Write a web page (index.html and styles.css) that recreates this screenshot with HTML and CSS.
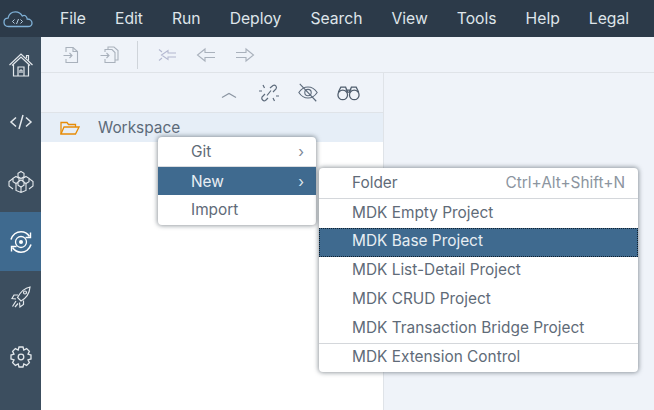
FILE: index.html
```html
<!DOCTYPE html>
<html lang="en">
<head>
<meta charset="utf-8">
<title>Business Application Studio</title>
<link rel="stylesheet" href="styles.css">
</head>
<body>
<header class="menubar">
  <svg class="logo" width="32" height="20" viewBox="0 0 32 20" fill="none" stroke="#7fb0d6" stroke-width="1.3"><path d="M8 17.5H6.5C3.5 17.5 2 15.500 2 13.200C2 10.800 3.800 9.200 6 9.200C6.800 5.200 10 2.800 13.500 2.800C16.500 2.800 19 4.500 20.300 7C21.500 6.300 23.500 6.500 24.500 8C25 8.800 25.200 9.500 25.200 10C28 10 30 11.800 30 14C30 16.200 28.200 17.500 26 17.500Z"/><path d="M12.500 10.500L10.500 12.500L12.500 14.500M18.500 10.500L20.500 12.500L18.500 14.500M16.500 10L14.500 15" stroke="#b8cfe2" stroke-width="1"/></svg>
  <nav class="menus">
    <span>File</span><span>Edit</span><span>Run</span><span>Deploy</span><span>Search</span><span>View</span><span>Tools</span><span>Help</span><span>Legal</span>
  </nav>
</header>
<div class="main">
  <aside class="sidebar">
    <div class="side-item s1"><svg width="26" height="26" viewBox="0 0 26 26" fill="none" stroke="#e3e8ec" stroke-width="1.200"><path d="M1.500 13L13 2L24.500 13M4 13.500L13 5L22 13.500"/><path d="M5.500 12.500V24H20.500V12.500M18.500 6V3.500H20.500V8.500"/><path d="M10 24V15H16V24M12 18V21M14 18V21M12 18H14"/></svg></div>
    <div class="side-item s2"><svg width="24" height="16" viewBox="0 0 24 16" fill="none" stroke="#e3e8ec" stroke-width="1.500"><path d="M7 3.500L2 8L7 12.500M17 3.500L22 8L17 12.500M14 1L10 15"/></svg></div>
    <div class="side-item s3"><svg width="28" height="24" viewBox="0 0 28 24" fill="none" stroke="#e3e8ec" stroke-width="1.100"><path d="M14 1.500L17 3.200V6.800L14 8.500L11 6.800V3.200ZM9 6.500L12 8.200V11.800L9 13.500L6 11.800V8.200ZM19 6.500L22 8.200V11.800L19 13.500L16 11.800V8.200ZM14 10L17 11.700V15.300L14 17L11 15.300V11.700Z"/><path d="M6 8.500L2 11.500V16L6 19M22 8.500L26 11.500V16L22 19M9 14V20.500L14 22.500L19 20.500V14M14 17V22.500"/></svg></div>
    <div class="side-item s4 active"><svg width="26" height="26" viewBox="0 0 26 26" fill="none" stroke="#fff" stroke-width="1.600"><path d="M3 10.500C4.500 6 8.500 2.800 13 2.800C16.500 2.800 19.500 4.500 21.500 7.500M23 15.500C21.500 20 17.500 23.200 13 23.200C9.500 23.200 6.500 21.500 4.500 18.500"/><path d="M22.500 3.500V8.500H17.500M3.500 22.500V17.500H8.500" stroke-width="1.400"/><circle cx="13" cy="13" r="5.500" stroke-width="1.300"/><circle cx="13" cy="13" r="2" fill="#fff" stroke="none"/></svg></div>
    <div class="side-item s5"><svg width="22" height="24" viewBox="0 0 22 24" fill="none" stroke="#e3e8ec" stroke-width="1.200"><path d="M20 2C14.500 3 10.500 7 7.500 12.500L11 16C16.500 13 19.500 8.500 20 2Z"/><path d="M8 10H4L2 13.500L6 14M13.500 15.500V19.500L10 22L9.500 17.500M6 16L2.500 21.500M8 18.500L5 22"/><circle cx="15" cy="7.500" r="1.500"/></svg></div>
    <div class="side-item s6"><svg width="24" height="24" viewBox="0 0 24 24" fill="none" stroke="#e3e8ec" stroke-width="1.300"><path d="M10 2H14L14.800 5L17.600 3.600L20.400 6.400L19 9.200L22 10V14L19 14.800L20.400 17.600L17.600 20.400L14.800 19L14 22H10L9.200 19L6.400 20.400L3.600 17.600L5 14.800L2 14V10L5 9.200L3.600 6.400L6.400 3.600L9.200 5Z"/><circle cx="12" cy="12" r="2.800"/></svg></div>
  </aside>
  <div class="workspace">
    <div class="toolbar">
      <svg class="t1" width="20" height="20" viewBox="0 0 20 20" fill="none" stroke="#a9b1bc" stroke-width="1.100"><path d="M5 7V2.500H12L16.500 6.500V17.500H5V14"/><path d="M12 2.500V6.500H16.500M2.500 10.500H11M8.500 8L11 10.500L8.500 13"/></svg>
      <svg class="t2" width="22" height="20" viewBox="0 0 22 20" fill="none" stroke="#a9b1bc" stroke-width="1.100"><path d="M7 7V4.500H14L17 7.500V17.500H7V14M10 4.500V2H16L20 5.500V15H17"/><path d="M2.500 10.500H11M8.500 8L11 10.500L8.500 13"/></svg>
      <span class="tool-sep"></span>
      <svg width="22" height="18" viewBox="0 0 22 18" fill="none" stroke="#b4b8d0" stroke-width="1.100"><path d="M20 7H12V4.500L5.500 9L12 13.500V11H20M3 3.500L6 6M3 14.500L6 12"/></svg>
      <svg width="22" height="18" viewBox="0 0 22 18" fill="none" stroke="#a9b1bc" stroke-width="1.100"><path d="M20 6.500H10V3L2.500 9L10 15V11.500H20"/></svg>
      <svg width="22" height="18" viewBox="0 0 22 18" fill="none" stroke="#a9b1bc" stroke-width="1.100"><path d="M2 6.500H12V3L19.500 9L12 15V11.500H2"/></svg>
    </div>
    <div class="panes">
      <section class="explorer">
        <div class="explorer-tools">
          <svg class="chev-up" width="18" height="10" viewBox="0 0 18 10" fill="none" stroke="#8c96a3" stroke-width="1.200"><path d="M2 7.500L9 3.500L16 7.500"/></svg>
          <svg width="22" height="22" viewBox="0 0 22 22" fill="none" stroke="#5d6b7c" stroke-width="1.200"><path d="M12 6L15 3.500C17 2.500 19.500 4.500 18 7L15 10M10 16L7.500 18.500C5.500 19.500 3 17.500 4 15L7 12M13 8.500L9 13.500M1 9H4M18 14H21M5 3L6.500 6M15 16L16.500 19"/></svg>
          <svg width="22" height="22" viewBox="0 0 24 22" fill="none" stroke="#5d6b7c" stroke-width="1.200"><path d="M2 10.500C5 6 8.500 4.500 12 4.500C15.500 4.500 19 6 22 10.500C19 15 15.500 16.500 12 16.500C8.500 16.500 5 15 2 10.500Z"/><circle cx="12" cy="10.500" r="3.500"/><path d="M3 1L21 20"/></svg>
          <svg width="25" height="18" viewBox="0 0 26 18" fill="none" stroke="#4f5d6d" stroke-width="1.300"><circle cx="7" cy="11" r="5"/><circle cx="19" cy="11" r="5"/><path d="M2.500 8L5 3H10L12 8H14L16 3H21L23.500 8M10 6H16"/></svg>
        </div>
        <div class="tree-row">
          <svg width="22" height="16" viewBox="0 0 22 16" fill="none" stroke="#e78c07" stroke-width="1.300"><path d="M3 14V2.500H9L10.500 4.500H17.500V7"/><path d="M3 14L6 7H21L17.500 14Z"/></svg>
          <span>Workspace</span>
        </div>
      </section>
      <section class="editor"></section>
    </div>
  </div>
</div>

<div class="menu primary">
  <div class="menu-item first"><span>Git</span><i class="chev">›</i></div>
  <div class="menu-item on"><span>New</span><i class="chev">›</i></div>
  <div class="menu-item last"><span>Import</span></div>
</div>

<div class="menu secondary">
  <div class="menu-item folder"><span>Folder</span><span class="shortcut">Ctrl+Alt+Shift+N</span></div>
  <div class="divider"></div>
  <div class="menu-item">MDK Empty Project</div>
  <div class="menu-item on focus">MDK Base Project</div>
  <div class="menu-item">MDK List-Detail Project</div>
  <div class="menu-item">MDK CRUD Project</div>
  <div class="menu-item">MDK Transaction Bridge Project</div>
  <div class="divider"></div>
  <div class="menu-item ext">MDK Extension Control</div>
</div>
</body>
</html>
```
FILE: styles.css
```css
* { box-sizing: border-box; }
html, body { margin: 0; height: 100%; overflow: hidden; }
body {
  width: 654px; height: 410px;
  display: flex; flex-direction: column;
  font-family: Inter, "Liberation Sans", sans-serif;
  font-size: 15.400px; color: #5a6876;
  background: #fff;
  position: relative;
}
.menubar {
  height: 37px; flex: none;
  display: flex; align-items: center;
  background: #2c3a49;
  padding-left: 1px;
}
.logo { margin-left: 1px; flex: none; }
.menus { display: flex; flex: none; margin-left: 26px; color: #dfe5ea; font-size: 15.700px; }
.menus span { margin-right: 29px; }
.menus span:last-child { margin-right: 0; }
.main { flex: 1; display: flex; min-height: 0; }
.sidebar { width: 41px; flex: none; background: #3c4e5f; display: flex; flex-direction: column; }
.side-item { display: flex; align-items: center; justify-content: center; }
.s1 { height: 55px; }
.s2 { height: 59px; }
.s3 { height: 61px; }
.s4 { height: 59px; }
.s5 { height: 52px; }
.s6 { height: 68px; }
.active { background: #3f6a8f; }
.workspace { flex: 1; display: flex; flex-direction: column; min-width: 0; }
.toolbar {
  height: 36px; flex: none;
  display: flex; align-items: center;
  padding-left: 20px; gap: 17px;
  background: #eff3f9;
  border-bottom: 1px solid #dfe3e8;
}
.tool-sep { width: 1px; height: 28px; background: #cfd4da; margin: 0 1px 0 0; }
.panes { flex: 1; display: flex; min-height: 0; }
.explorer { width: 343px; flex: none; background: #fff; border-right: 1px solid #dfe3e8; }
.explorer-tools {
  height: 40px;
  display: flex; align-items: center; justify-content: flex-end;
  padding-right: 22px; gap: 17px;
  background: #eff3f9;
  border-bottom: 1px solid #dfe3e8;
}
.chev-up { margin: 4px 3px 0 0; }
.tree-row {
  height: 29px;
  display: flex; align-items: center;
  padding-left: 17px; gap: 18px;
  background: #e6eef7;
  color: #5c6a79;
}
.editor { flex: 1; background: #eff3f9; }
.menu {
  position: absolute;
  background: #fff;
  border-radius: 4px;
  box-shadow: 0 0 4px 1px rgba(70, 80, 90, .55);
  color: #5f6b78;
}
.menu-item { display: flex; align-items: center; justify-content: space-between; }
.primary { left: 158px; top: 137px; width: 158px; height: 88px; }
.primary .menu-item { padding: 0 12px 0 33px; }
.primary .first { height: 30px; border-bottom: 1px solid #d9dce0; padding-bottom: 1px; }
.primary .on { height: 28px; }
.primary .last { height: 30px; padding-bottom: 2px; }
.chev { font-style: normal; font-size: 15px; color: #7d8996; }
.on { background: #3f6a8f; color: #e8eef3; }
.on .chev { color: #dfe6ec; }
.secondary { left: 319px; top: 168px; width: 319px; height: 204px; }
.secondary .menu-item { height: 28.800px; padding: 0 13px 2.500px 33px; }
.secondary .folder { height: 30px; padding-bottom: 1.500px; }
.secondary .ext { height: 28px; }
.shortcut { color: #8c95a0; }
.divider { height: 1px; background: #d4d7db; }
.focus { outline: 1px dotted #10202e; outline-offset: -1px; }
```
